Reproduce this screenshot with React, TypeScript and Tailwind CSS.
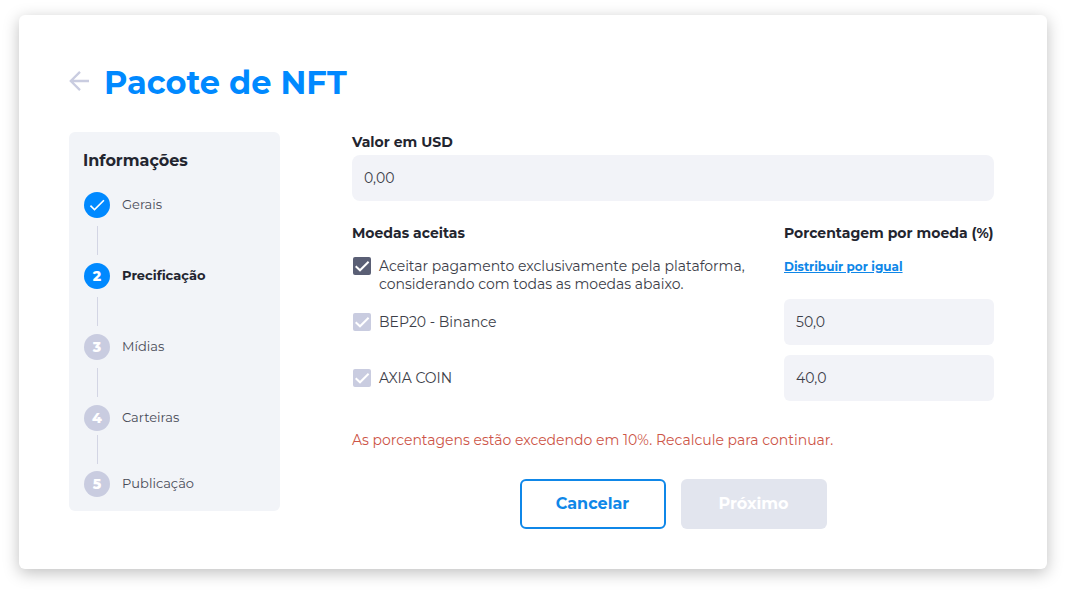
import React from "react";

type Step = { label: string; state: "done" | "current" | "todo" };

const steps: Step[] = [
  { label: "Gerais", state: "done" },
  { label: "Precificação", state: "current" },
  { label: "Mídias", state: "todo" },
  { label: "Carteiras", state: "todo" },
  { label: "Publicação", state: "todo" },
];

const coins = [
  { id: "bep20", name: "BEP20 - Binance", share: "50,0" },
  { id: "axia", name: "AXIA COIN", share: "40,0" },
];

function CheckMark({ className }: { className: string }) {
  return (
    <svg viewBox="0 0 24 24" className={className} fill="currentColor" aria-hidden="true">
      <path d="M9 16.17 4.83 12l-1.42 1.41L9 19 21 7l-1.41-1.41z" />
    </svg>
  );
}

function Checkbox({ id, disabled = false }: { id: string; disabled?: boolean }) {
  return (
    <span className="relative block size-[18px] shrink-0">
      <input
        id={id}
        type="checkbox"
        defaultChecked
        disabled={disabled}
        className="block size-[18px] appearance-none rounded-xs bg-[#5a5f75] disabled:bg-[#c9cce0]"
      />
      <svg
        viewBox="0 0 18 18"
        className="pointer-events-none absolute inset-0 size-[18px] text-white"
        fill="none"
        stroke="currentColor"
        strokeWidth="2"
        aria-hidden="true"
      >
        <path d="M2.7 9.2 7 13.3 15.6 4.7" />
      </svg>
    </span>
  );
}

function StepItem({ step, index }: { step: Step; index: number }) {
  const last = index === steps.length - 1;
  const beforeLast = index === steps.length - 2;
  return (
    <li>
      <div className="flex items-center gap-3">
        <span
          className={`flex size-[26px] items-center justify-center rounded-full text-sm font-extrabold text-white ${
            step.state === "todo" ? "bg-[#c9cce0]" : "bg-[#0089ff]"
          }`}
        >
          {step.state === "done" ? <CheckMark className="size-5" /> : index + 1}
        </span>
        <span className={`text-[13px] ${step.state === "current" ? "font-bold" : "font-normal text-[#484b57]"}`}>
          {step.label}
        </span>
      </div>
      {!last && (
        <div className={`ml-[13px] h-[29px] w-px bg-[#d3d5e4] ${beforeLast ? "mt-1 mb-[7px]" : "my-2"}`} />
      )}
    </li>
  );
}

export default function App() {
  return (
    <div className="bg-white px-[19px] pt-[15px] pb-[23px] font-['Montserrat','Inter',sans-serif] text-[#23252f]">
      <main className="rounded-md bg-white pt-12 pr-[53px] pb-10 pl-[50px] shadow-[0_4px_16px_rgba(0,0,0,0.25)]">
        <header className="flex items-center gap-[15px]">
          <button type="button" aria-label="Voltar" className="pb-1 text-[#c9cce0]">
            <svg viewBox="0 0 20 20" className="size-5" fill="none" stroke="currentColor" strokeWidth="2.3" aria-hidden="true">
              <path d="M20 10H1.8M11 .9 1.8 10l9.2 9.1" />
            </svg>
          </button>
          <h1 className="text-[32px] leading-10 font-bold text-[#0089ff]">Pacote de NFT</h1>
        </header>

        <div className="mt-[29px] flex items-start gap-[72px]">
          <aside className="w-[211px] shrink-0 rounded-md bg-[#f2f4f8] px-[14px] pt-[17px] pb-[14px]">
            <h2 className="mb-[19px] text-base leading-6 font-bold">Informações</h2>
            <ol className="pl-px">
              {steps.map((step, i) => (
                <StepItem key={step.label} step={step} index={i} />
              ))}
            </ol>
          </aside>

          <form className="min-w-0 flex-1" onSubmit={(e) => e.preventDefault()}>
            <label htmlFor="price" className="block pb-[3px] text-sm leading-5 font-bold">
              Valor em USD
            </label>
            <input
              id="price"
              type="text"
              defaultValue="0,00"
              className="block h-[46px] w-full rounded-lg bg-[#f2f3f8] px-3 text-sm font-normal text-[#3c3e49] outline-none"
            />

            <div className="mt-[22px] flex items-center justify-between text-sm leading-5 font-bold">
              <h3>Moedas aceitas</h3>
              <h3 className="w-[210px] whitespace-nowrap">Porcentagem por moeda (%)</h3>
            </div>

            <div className="mt-[14px] flex items-start justify-between">
              <div className="flex gap-2 pl-px">
                <Checkbox id="exclusive" />
                <label htmlFor="exclusive" className="text-sm leading-[18px] font-normal text-[#3c3e49]">
                  Aceitar pagamento exclusivamente pela plataforma,
                  <br />
                  considerando com todas as moedas abaixo.
                </label>
              </div>
              <div className="w-[210px] leading-[18px]">
                <a href="#distribuir" className="text-xs font-bold text-[#0f87e8] underline">
                  Distribuir por igual
                </a>
              </div>
            </div>

            <div className="mt-[6px] flex flex-col gap-[10px]">
              {coins.map((coin) => (
                <div key={coin.id} className="flex items-center justify-between">
                  <div className="flex items-center gap-2 pl-px">
                    <Checkbox id={coin.id} disabled />
                    <label htmlFor={coin.id} className="text-sm leading-[18px] font-normal text-[#3c3e49]">
                      {coin.name}
                    </label>
                  </div>
                  <input
                    type="text"
                    aria-label={`Porcentagem ${coin.name}`}
                    defaultValue={coin.share}
                    className="h-[46px] w-[210px] rounded-md bg-[#f2f3f8] px-3 text-sm font-normal text-[#3c3e49] outline-none"
                  />
                </div>
              ))}
            </div>

            <p role="alert" className="mt-[29px] text-sm leading-5 font-normal text-[#cd5547]">
              As porcentagens estão excedendo em 10%. Recalcule para continuar.
            </p>

            <div className="mt-[29px] flex justify-center gap-[15px]">
              <button
                type="button"
                className="h-[50px] w-[146px] rounded-md border-2 border-[#0f87e8] font-bold text-[#0f87e8]"
              >
                Cancelar
              </button>
              <button type="submit" disabled className="h-[50px] w-[146px] rounded-md bg-[#e2e5ee] font-bold text-white">
                Próximo
              </button>
            </div>
          </form>
        </div>
      </main>
    </div>
  );
}
